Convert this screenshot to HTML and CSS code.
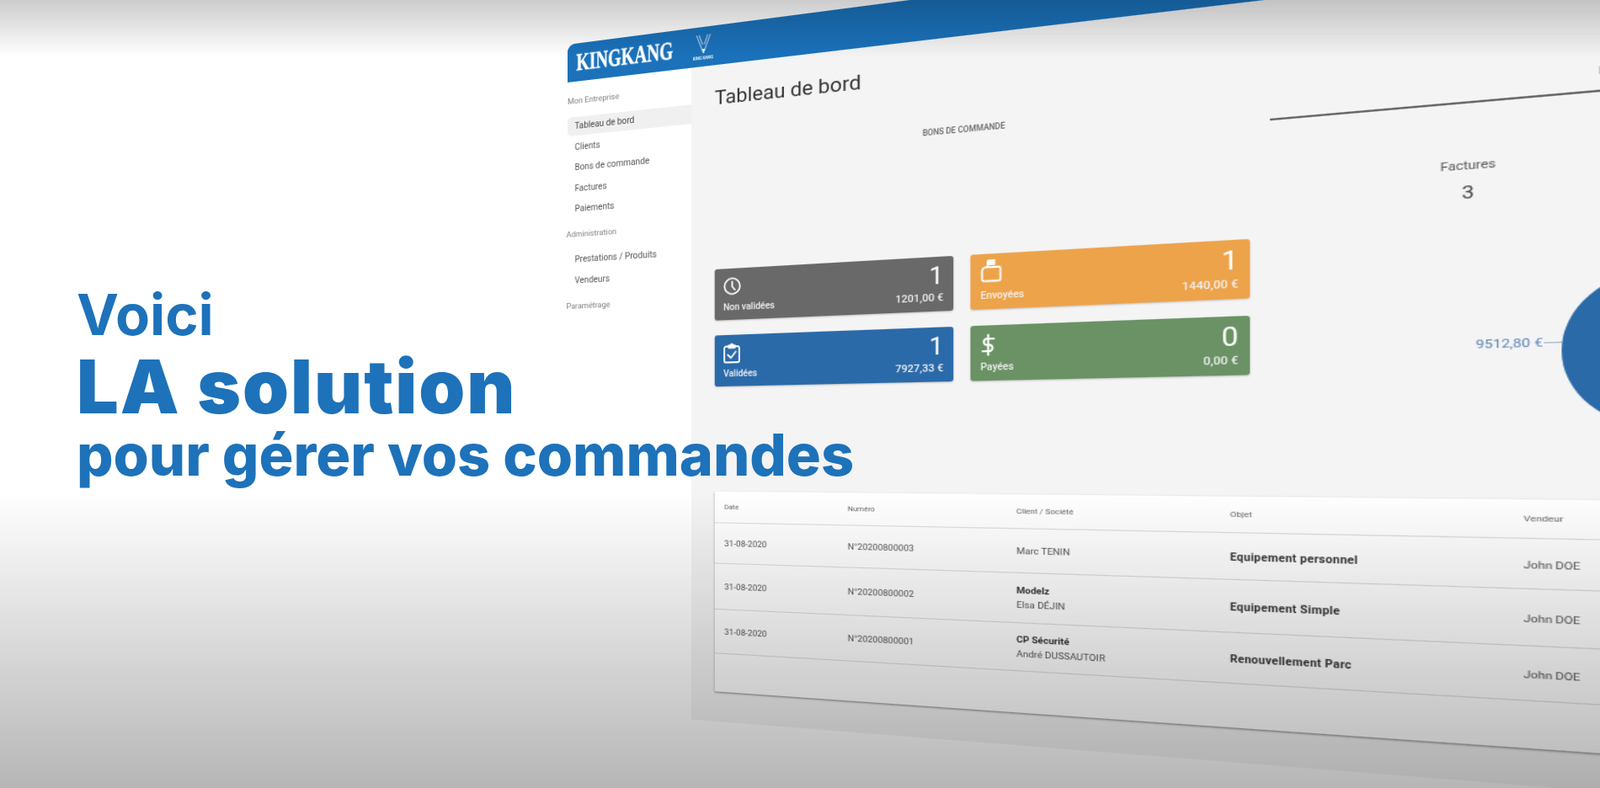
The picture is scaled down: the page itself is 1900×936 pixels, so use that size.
FILE: index.html
```html
<!DOCTYPE html>
<html lang="fr">
<head>
    <meta charset="UTF-8">
    <title>KingKang - Tableau de bord</title>
    <link rel="stylesheet" href="styles.css">
</head>
<body>
<div class="stage">
    <!-- maquette du tableau de bord, posée en perspective -->
    <div class="dash">
        <header class="dash-head">
            <div class="brand"><span>KINGKANG</span></div>
            <div class="mark">
                <svg width="20" height="25" viewBox="0 0 20 25" fill="none" stroke="#d5e6f5" stroke-width="1">
                    <path d="M2 1L7 14M5 1L9 12M18 1L13 14M15 1L11 12"/>
                    <path d="M7 14L10 22L13 14"/>
                    <path d="M8 17H12L10 21Z" fill="#fff" stroke="none"/>
                </svg>
                <span>KING KANG</span>
            </div>
        </header>
        <div class="dash-body">
            <aside class="sidebar">
                <div class="side-label">Mon Entreprise</div>
                <ul class="side-list">
                    <li class="active">Tableau de bord</li>
                    <li>Clients</li>
                    <li>Bons de commande</li>
                    <li>Factures</li>
                    <li>Paiements</li>
                </ul>
                <div class="side-label spaced">Administration</div>
                <ul class="side-list">
                    <li>Prestations / Produits</li>
                    <li>Vendeurs</li>
                </ul>
                <div class="side-label spaced">Paramétrage</div>
            </aside>
            <main class="content">
                <h1 class="page-title">Tableau de bord</h1>
                <div class="overview">
                    <section class="orders">
                        <div class="orders-title">BONS DE COMMANDE</div>
                        <div class="stats">
                            <div class="stat stat-grey">
                                <svg class="stat-icon" width="20" height="20" viewBox="0 0 20 20" fill="none" stroke="currentColor" stroke-width="1.8" stroke-linecap="round" stroke-linejoin="round">
                                    <circle cx="10" cy="10" r="8.8"/>
                                    <path d="M10 5V10.5L13 14"/>
                                </svg>
                                <div class="stat-count">1</div>
                                <div class="stat-name">Non validées</div>
                                <div class="stat-total">1201,00 €</div>
                            </div>
                            <div class="stat stat-orange">
                                <svg class="stat-icon" width="21" height="25" viewBox="0 0 21 25" fill="none" stroke="currentColor" stroke-width="1.9" stroke-linecap="round" stroke-linejoin="round">
                                    <path d="M7 9H17.5A2 2 0 0 1 19.5 11V21.5A2 2 0 0 1 17.5 23.5H3.5A2 2 0 0 1 1.5 21.5V13A4 4 0 0 1 5.5 9H7V3"/>
                                    <path d="M7.5 2H13.5V6H7.5Z" fill="currentColor"/>
                                </svg>
                                <div class="stat-count">1</div>
                                <div class="stat-name">Envoyées</div>
                                <div class="stat-total">1440,00 €</div>
                            </div>
                            <div class="stat stat-blue">
                                <svg class="stat-icon" width="19" height="23" viewBox="0 0 19 23" fill="none" stroke="currentColor" stroke-width="1.8" stroke-linecap="round" stroke-linejoin="round">
                                    <path d="M6 4H3A2 2 0 0 0 1 6V20A2 2 0 0 0 3 22H16A2 2 0 0 0 18 20V6A2 2 0 0 0 16 4H13"/>
                                    <path d="M6 5V3H8A1.5 1.5 0 0 1 11 3H13V5.5H6Z" fill="currentColor"/>
                                    <path d="M5 13.5L8.5 17L14 10"/>
                                </svg>
                                <div class="stat-count">1</div>
                                <div class="stat-name">Validées</div>
                                <div class="stat-total">7927,33 €</div>
                            </div>
                            <div class="stat stat-green">
                                <svg class="stat-icon" width="15" height="23" viewBox="0 0 15 23" fill="none" stroke="currentColor" stroke-width="2" stroke-linecap="round" stroke-linejoin="round">
                                    <path d="M7.5 1V22M13 5H5.5A3.5 3.5 0 0 0 5.5 11.5H9.5A3.5 3.5 0 0 1 9.5 18H2"/>
                                </svg>
                                <div class="stat-count">0</div>
                                <div class="stat-name">Payées</div>
                                <div class="stat-total">0,00 €</div>
                            </div>
                        </div>
                    </section>
                    <section class="revenue">
                        <div class="axis-note">E</div>
                        <div class="axis"></div>
                        <div class="invoices">
                            <div class="invoices-name">Factures</div>
                            <div class="invoices-count">3</div>
                        </div>
                        <div class="pie-row">
                            <span class="pie-label">9512,80 €</span>
                            <span class="pie-tick"></span>
                            <div class="pie"></div>
                        </div>
                    </section>
                </div>
                <div class="orders-table">
                    <div class="row row-head">
                        <div>Date</div><div>Numéro</div><div>Client / Société</div><div>Objet</div><div>Vendeur</div>
                    </div>
                    <div class="row row-first">
                        <div>31-08-2020</div>
                        <div>N°20200800003</div>
                        <div>Marc TENIN</div>
                        <div class="subject">Equipement personnel</div>
                        <div class="seller">John DOE</div>
                    </div>
                    <div class="row row-second">
                        <div>31-08-2020</div>
                        <div>N°20200800002</div>
                        <div><b>Modelz</b><br>Elsa DÉJIN</div>
                        <div class="subject">Equipement Simple</div>
                        <div class="seller">John DOE</div>
                    </div>
                    <div class="row row-third">
                        <div>31-08-2020</div>
                        <div>N°20200800001</div>
                        <div><b>CP Sécurité</b><br>André DUSSAUTOIR</div>
                        <div class="subject">Renouvellement Parc</div>
                        <div class="seller">John DOE</div>
                    </div>
                </div>
            </main>
        </div>
    </div>

    <div class="shade"></div>

    <div class="headline">
        <div class="line-one">Voici</div>
        <div class="line-two">LA solution</div>
        <div class="line-three">pour gérer vos commandes</div>
    </div>
</div>
</body>
</html>
```

FILE: styles.css
```css
* {
    box-sizing: border-box;
}

body {
    margin: 0;
    font-family: Roboto, "Liberation Sans", sans-serif;
}

.stage {
    position: relative;
    width: 1900px;
    height: 936px;
    overflow: hidden;
    background-color: #ffffff;
}

/* tableau de bord à plat, puis incliné */
.dash {
    position: absolute;
    left: 0;
    top: 0;
    width: 1200px;
    transform-origin: 0 0;
    transform: matrix3d(0.775, -0.13625, 0, -0.00025, 0, 1, 0, 0, 0, 0, 1, 0, 674, 53, 0, 1);
    filter: blur(0.7px);
}

.dash-head {
    display: flex;
    align-items: center;
    height: 45px;
    background-color: #1b72bb;
    border-top-left-radius: 9px;
}

.brand {
    width: 149px;
    padding-left: 11px;
    color: #ffffff;
    font-family: "Liberation Serif", serif;
    font-weight: bold;
    font-size: 29px;
    -webkit-text-stroke: 0.6px #ffffff;
}
.brand span {
    display: inline-block;
    transform: scaleX(0.715);
    transform-origin: left;
}

.mark {
    display: flex;
    flex-direction: column;
    align-items: center;
    width: 29px;
    color: #e6f0f9;
    font-size: 4.5px;
    font-weight: bold;
}

.dash-body {
    display: flex;
}

.sidebar {
    width: 150px;
    padding-top: 15px;
    color: #555555;
}

.side-label {
    height: 16px;
    line-height: 16px;
    font-size: 9.5px;
    color: #808080;
}
.side-label.spaced {
    margin-top: 11px;
    margin-left: -1.5px;
}

.side-list {
    list-style: none;
    margin: 11px 0 0 0;
    padding: 0;
}
.side-list li {
    height: 22px;
    line-height: 22px;
    margin-bottom: 2.5px;
    padding-left: 9px;
    font-size: 10.3px;
}
.side-list li.active {
    background-color: #f0f0f0;
    color: #444444;
    border-radius: 5px 0 0 5px;
}

.content {
    width: 1050px;
    height: 745px;
    padding: 24px 0 0 27px;
    background-color: #f4f4f4;
}

.page-title {
    margin: 0;
    height: 28px;
    line-height: 28px;
    font-size: 22.6px;
    font-weight: 400;
    color: #333333;
}

.overview {
    display: grid;
    grid-template-columns: 530px 1fr;
    column-gap: 17px;
    margin-top: 33px;
}

.orders-title {
    margin-top: 7px;
    padding-left: 2px;
    line-height: 14px;
    text-align: center;
    font-size: 8.2px;
    font-weight: 500;
    color: #666666;
}

.stats {
    display: grid;
    grid-template-columns: 256px 257px;
    grid-auto-rows: 58px;
    gap: 17px;
    margin-top: 126px;
}

.stat {
    display: grid;
    grid-template-columns: 1fr auto;
    grid-template-rows: 26px 20px;
    align-items: center;
    padding: 7px 10px 0 10px;
    color: #ffffff;
    border-radius: 3px;
    box-shadow: 0 1px 2px rgba(0, 0, 0, 0.2);
}
.stat-grey { background-color: #696969; }
.stat-orange { background-color: #eda34a; }
.stat-blue { background-color: #2b6aa9; }
.stat-green { background-color: #6a9265; }

.stat-count {
    text-align: right;
    font-size: 26px;
    line-height: 26px;
}
.stat-name {
    font-size: 10px;
    font-weight: 500;
    color: #f0f0f0;
}
.stat-total {
    text-align: right;
    font-size: 11px;
    font-weight: 500;
    color: #f0f0f0;
}
.stat-orange .stat-icon {
    margin-top: -5px;
}

.axis-note {
    margin-top: 7px;
    padding-left: 256px;
    line-height: 14px;
    font-size: 9px;
    color: #444444;
}
.axis {
    height: 1.5px;
    margin-top: 10px;
    background-color: #666666;
}

.invoices {
    width: 318px;
    margin-top: 50px;
    text-align: center;
    color: #555555;
}
.invoices-name {
    line-height: 16px;
    font-size: 11px;
}
.invoices-count {
    margin-top: 4px;
    line-height: 24px;
    font-size: 17px;
    color: #444444;
}

.pie-row {
    display: flex;
    align-items: center;
    margin: 67px 0 0 165px;
}
.pie-label {
    width: 51px;
    margin-bottom: 15px;
    font-size: 11.5px;
    color: #5b82b5;
}
.pie-tick {
    width: 13px;
    height: 1px;
    margin-bottom: 15px;
    background-color: #9db5d0;
}
.pie {
    flex: none;
    width: 140px;
    height: 140px;
    border-radius: 50%;
    background-color: #2b6aa9;
}

.orders-table {
    margin-top: 65.5px;
    background-color: #ffffff;
    box-shadow: 0 1px 2px rgba(0, 0, 0, 0.45);
    height: 226.5px;
    color: #555555;
    filter: blur(0.5px);
}

.row {
    display: grid;
    grid-template-columns: 136px 171px 195px 235px 1fr;
    align-items: center;
    padding-left: 11px;
    border-bottom: 1px solid #dddddd;
    font-size: 9.5px;
    line-height: 15px;
}
.row-head {
    height: 35.5px;
    font-size: 8px;
    color: #666666;
}
.row-first { height: 46px; }
.row-second { height: 52px; }
.row-third { height: 50px; }

.row b {
    font-weight: 700;
    color: #333333;
}
.subject {
    padding-top: 2px;
    font-size: 10px;
    font-weight: 700;
    letter-spacing: 0.3px;
    color: #333333;
}
.seller {
    padding-top: 3px;
}

/* voile gris en haut et en bas de l'image */
.shade {
    position: absolute;
    inset: 0;
    background:
        linear-gradient(to bottom, rgba(0, 0, 0, 0.2) 0, rgba(0, 0, 0, 0) 68px),
        linear-gradient(to bottom, rgba(0, 0, 0, 0) 585px, rgba(0, 0, 0, 0.285) 936px);
}

.headline {
    position: absolute;
    left: 91px;
    top: 336px;
    font-family: Inter, "Open Sans", sans-serif;
    color: #1d72ba;
    white-space: nowrap;
}
.line-one {
    font-size: 67px;
    line-height: 75px;
    font-weight: 700;
}
.line-two {
    margin-top: 1px;
    font-size: 88px;
    line-height: 95px;
    font-weight: 900;
    letter-spacing: 2px;
}
.line-three {
    margin-top: -2px;
    font-size: 68.3px;
    line-height: 71px;
    font-weight: 800;
}
```
